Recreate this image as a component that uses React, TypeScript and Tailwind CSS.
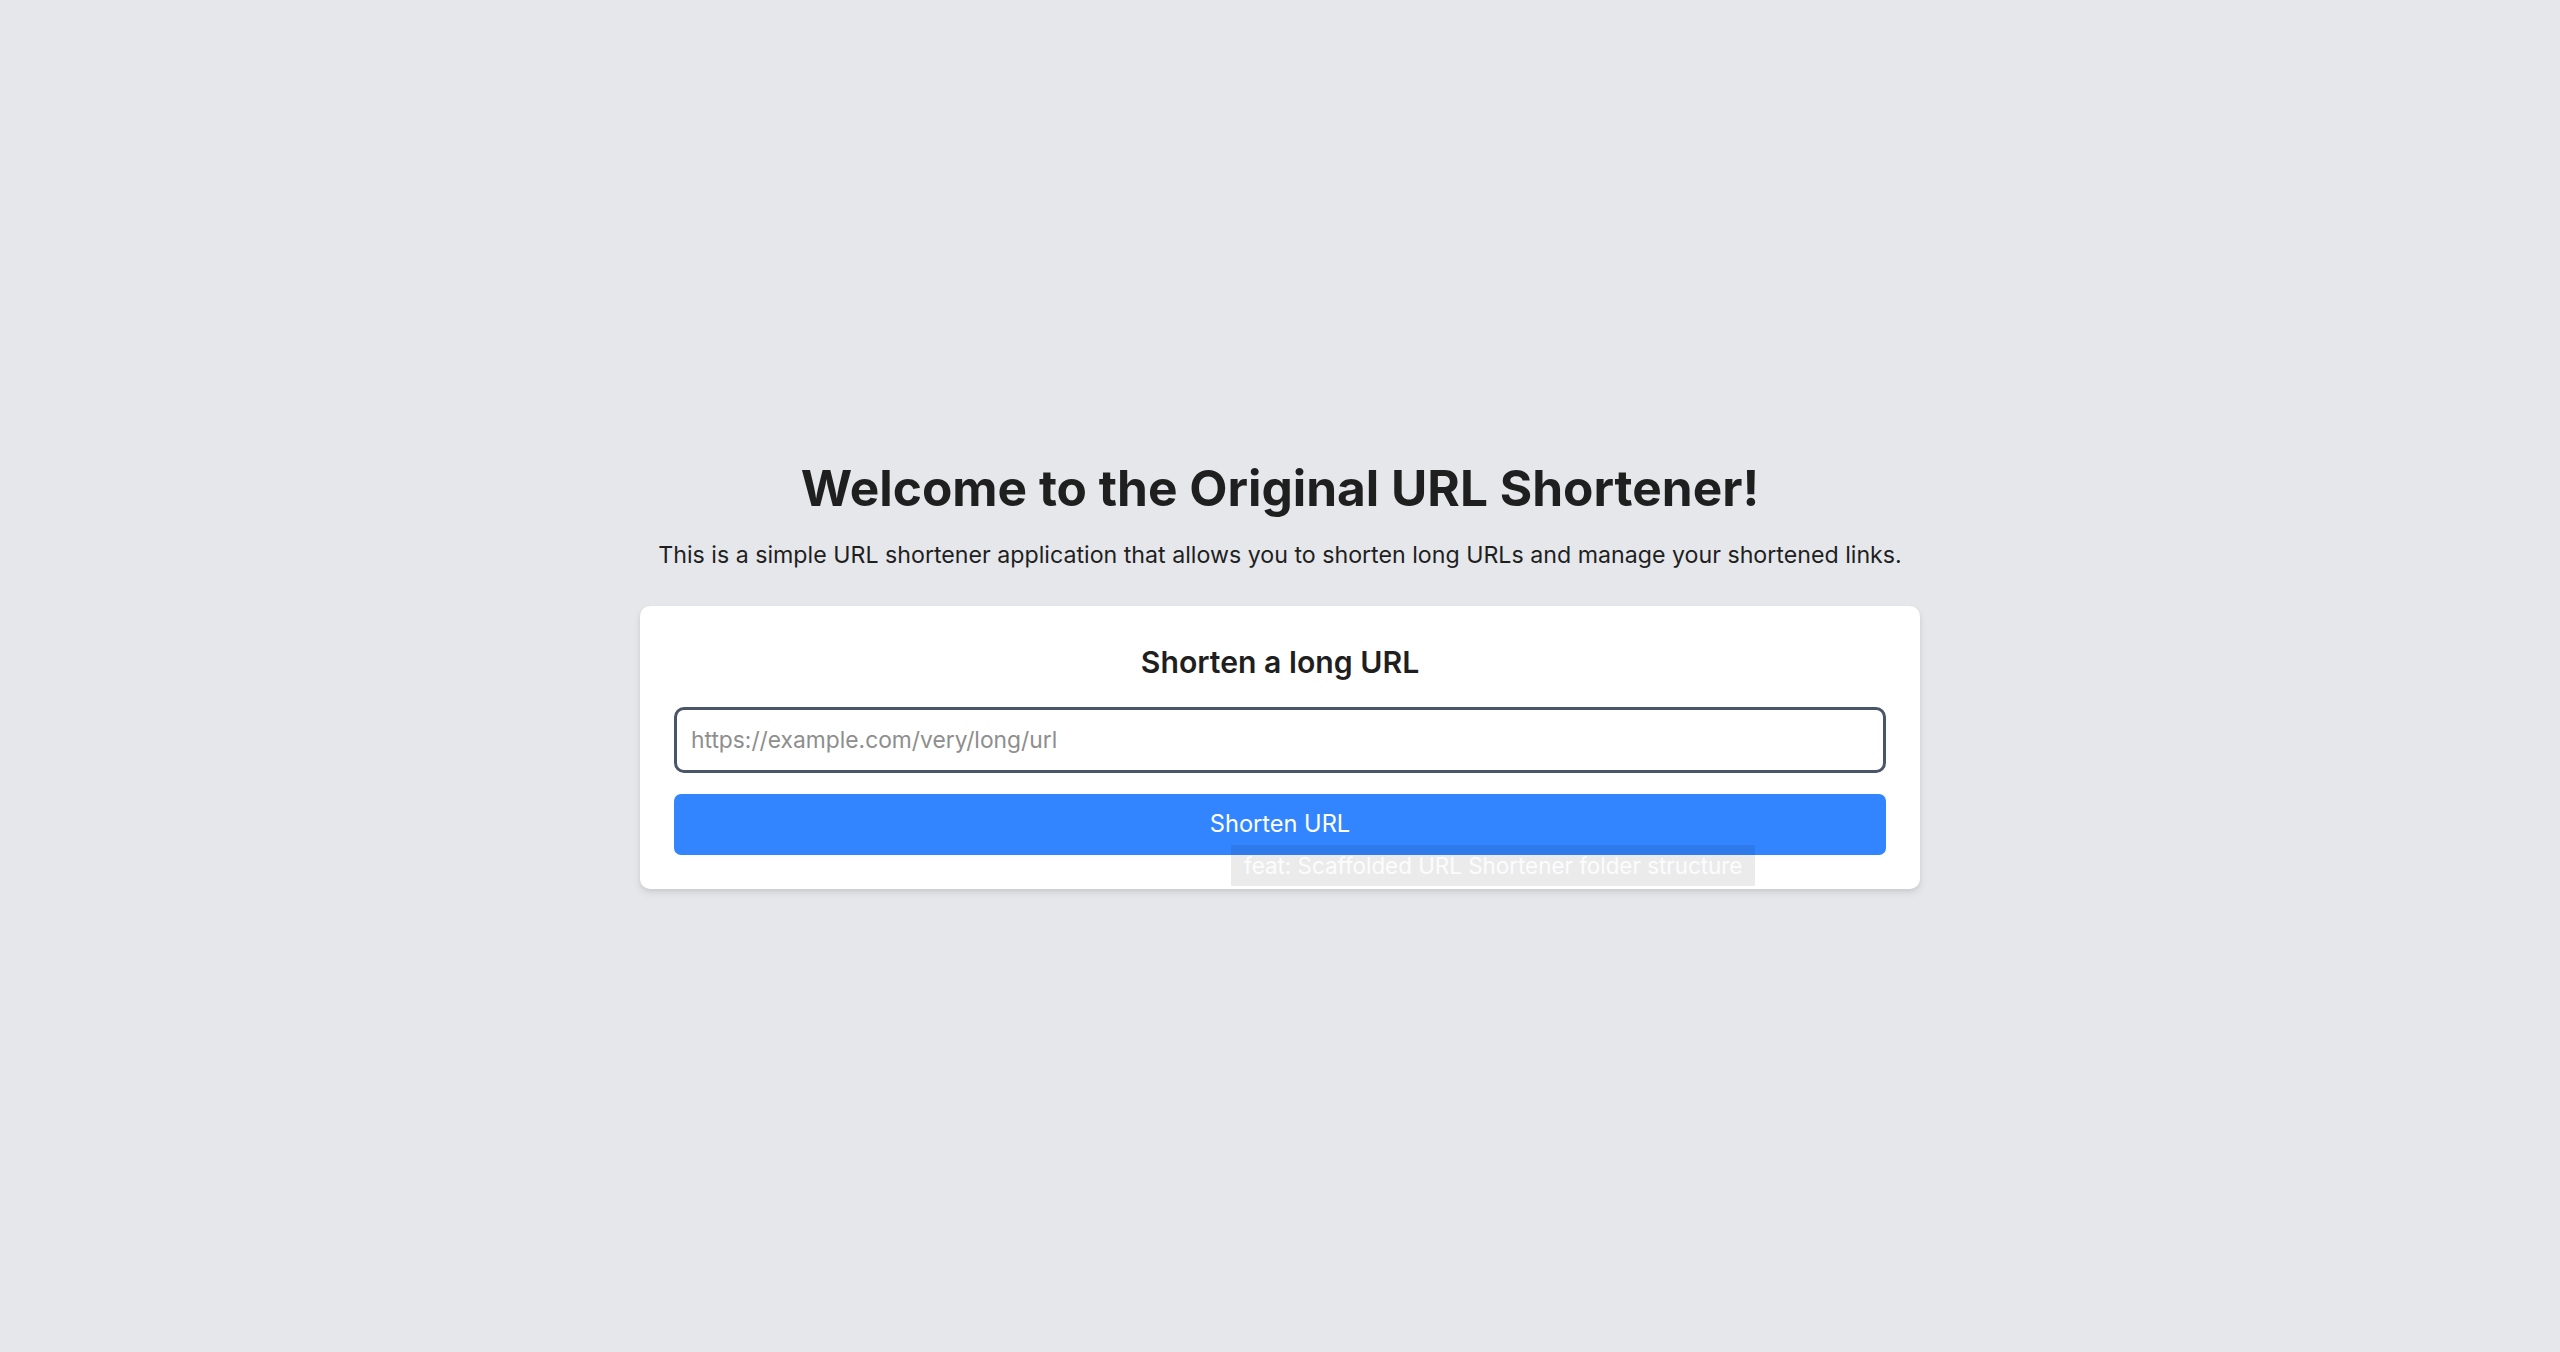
export default function App() {
  return (
    <div
      className="min-h-screen bg-[#e5e7eb] flex flex-col items-center justify-center text-[#1f1f1f]"
      style={{ fontFamily: "Inter, 'Noto Sans', sans-serif" }}
    >
      {/* Encabezado */}
      <h1 className="text-[49.6px] leading-[48px] font-bold">
        Welcome to the Original URL Shortener!
      </h1>
      <p className="mt-[27px] text-[23.2px] leading-[32px]">
        This is a simple URL shortener application that allows you to shorten long URLs and manage your shortened links.
      </p>

      {/* Tarjeta */}
      <div className="relative mt-[35px] w-[1280px] rounded-[10px] bg-white p-[34px] shadow-[0_4px_8px_rgba(0,0,0,0.08),0_2px_4px_rgba(0,0,0,0.06)]">
        <h2 className="text-center text-[30.2px] leading-[45px] font-semibold mb-[22px]">
          Shorten a long URL
        </h2>
        <form className="flex flex-col gap-[21px]">
          <input
            type="url"
            placeholder="https://example.com/very/long/url"
            className="h-[66px] w-full rounded-[10px] border-[3px] border-[#4a5568] px-[14px] text-[22.8px] placeholder:text-[#8e8e8e] focus:outline-none"
          />
          <button
            type="button"
            className="h-[61px] w-full rounded-[7px] bg-[#3385ff] text-[23.6px] text-white"
          >
            Shorten URL
          </button>
        </form>

        {/* Tooltip de commit */}
        <div className="absolute left-[591px] top-[239px] h-[41px] w-[524px] bg-black/[0.08] px-[13px] text-[22.4px] leading-[41px] text-white/85 whitespace-nowrap">
          feat: Scaffolded URL Shortener folder structure
        </div>
      </div>
    </div>
  );
}
